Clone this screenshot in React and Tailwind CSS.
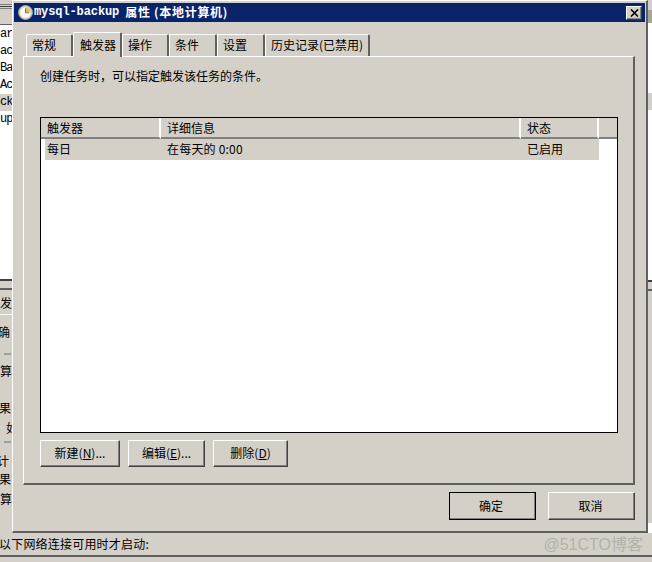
import React from 'react'

const cjk = "font-['SimSun','Noto_Sans_CJK_SC','Liberation_Sans',sans-serif]"
const raised = 'border border-t-white border-l-white border-r-[#404040] border-b-[#404040] bg-[#d4d0c8] shadow-[inset_-1px_-1px_0_#808080]'

function ClockIcon() {
  return (
    <svg width="15" height="15" viewBox="0 0 15 15" className="shrink-0">
      <circle cx="7.5" cy="7.5" r="6.9" fill="#d8d4cc" stroke="#b4ae9e" strokeWidth="1" />
      <circle cx="7.5" cy="7.5" r="5.2" fill="#fbfaf4" />
      <path d="M7.5 2.3A5.2 5.2 0 0 1 12.7 7.5H7.5Z" fill="#e6bc5c" />
      <path d="M7.5 3.4V7.8H11" fill="none" stroke="#77736a" strokeWidth="1" />
    </svg>
  )
}

function Tab({ label, className, active }) {
  return (
    <div
      className={`flex items-center rounded-t-[2px] border-t border-l border-t-white border-l-white border-r-2 border-r-[#606060] bg-[#d4d0c8] pb-[1px] text-[12px] text-black ${
        active ? 'z-10 -mb-px h-[25px] pl-[6px]' : 'h-[22px] pl-[5px]'
      } ${className}`}
    >
      <span className="whitespace-nowrap">{label}</span>
    </div>
  )
}

function HeaderCell({ label, className }) {
  return (
    <div className={`flex h-[21px] items-center border-b-2 border-r-2 border-b-[#808080] border-r-white pl-[6px] text-[12px] ${className}`}>
      {label}
    </div>
  )
}

function Hotkey({ before, letter, after }) {
  return (
    <span>
      {before}(<span className="underline">{letter}</span>){after}
    </span>
  )
}

function Button({ children, className }) {
  return <button type="button" className={`${raised} flex items-center justify-center pb-[1px] text-[12px] text-black ${className}`}>{children}</button>
}

function LeftStrip() {
  const rows = [
    ['ar', ''],
    ['ac', ''],
    ['Ba', ''],
    ['Ac', ''],
    ['ck', 'bg-[#d4d0c8]'],
    ['up', ''],
  ]
  return (
    <div className="flex h-[533px] w-[12px] flex-col overflow-hidden bg-[#d4d0c8]">
      <div className="flex h-[5px] flex-col justify-end"><div className="h-px bg-[#808080]" /></div>
      <div className="mt-[1px] h-[1px] bg-[#404040]" />
      <div className="mt-[1px] h-[1px] bg-[#808080]" />
      <div className="h-[15px]" />
      <div className="h-[1px] bg-[#606060]" />
      <div className="h-[254px] bg-white pt-[1px] font-['Liberation_Mono',monospace] text-[12px] leading-[17px] tracking-[-1px] text-black">
        {rows.map(([text, bg]) => (
          <div key={text} className={`h-[17px] whitespace-nowrap ${bg}`}>{text}</div>
        ))}
      </div>
      <div className="h-[2px] bg-[#404040]" />
      <div className="h-[7px]" />
      <div className="h-[2px] bg-[#606060]" />
      <div className={`h-[24px] overflow-hidden whitespace-nowrap pt-[5px] text-[12px] leading-[16px] text-black ${cjk}`}>发</div>
      <div className="h-px bg-white" />
      <div className={`flex flex-col text-[12px] leading-[18px] text-black ${cjk}`}>
        <div className="mt-[8px] h-[18px] -ml-[2px] whitespace-nowrap">确</div>
        <div className="mt-[12px] ml-[4px] h-[2px] w-[7px] bg-[#a0a0a0]" />
        <div className="mt-[7px] h-[18px]">算</div>
        <div className="mt-[19px] h-[18px] -ml-[1px]">果</div>
        <div className="ml-[6px] mt-[2px] h-[18px] whitespace-nowrap">如</div>
        <div className="mt-[4px] ml-[4px] h-[2px] w-[7px] bg-[#a0a0a0]" />
        <div className="mt-[9px] h-[18px] -ml-[3px] whitespace-nowrap">计</div>
        <div className="h-[18px] -ml-[1px]">果</div>
        <div className="mt-[2px] h-[18px]">算</div>
      </div>
    </div>
  )
}

function RightStrip() {
  return (
    <div className="flex h-[533px] w-[4px] flex-col overflow-hidden bg-white">
      <div className="h-[10px] bg-[#d4d0c8]" />
      <div className="h-[13px] bg-[#a8a49c]" />
      <div className="h-[70px]" />
      <div className="h-[17px] bg-[#d4d0c8]" />
      <div className="h-[170px]" />
      <div className="h-[2px] bg-[#404040]" />
      <div className="h-[7px] bg-[#d4d0c8]" />
      <div className="h-[2px] bg-[#606060]" />
      <div className="h-[232px] bg-[#d4d0c8]" />
    </div>
  )
}

function Dialog() {
  return (
    <div className={`absolute left-[12px] top-0 flex h-[533px] w-[636px] flex-col border-t border-l border-r-2 border-b-2 border-t-white border-l-white border-r-[#606060] border-b-[#606060] bg-[#d4d0c8] pl-[1px] pt-[2px] ${cjk}`}>
      <div className="flex h-[19px] w-[631px] items-center bg-[#0a246a] pl-[4px] pr-[3px] text-white">
        <ClockIcon />
        <span className="ml-[1px] whitespace-nowrap pb-[1px] font-['Liberation_Mono',monospace] text-[12px] font-bold tracking-[-0.1px]">mysql-backup</span>
        <span className={`ml-[6px] whitespace-nowrap pb-[1px] text-[12px] font-bold tracking-[0.7px] ${cjk}`}>属性 (本地计算机)</span>
        <button type="button" className={`${raised} ml-auto flex h-[14px] w-[16px] items-center justify-center`}>
          <svg width="9" height="8" viewBox="0 0 9 8">
            <path d="M1 0.5L8 7.5M8 0.5L1 7.5" stroke="#000" strokeWidth="1.6" />
          </svg>
        </button>
      </div>

      <div className="ml-[11px] mt-[10px] flex h-[24px] items-end pl-[1px]">
        <Tab label="常规" className="w-[47px]" />
        <Tab label="触发器" active className="w-[49px]" />
        <Tab label="操作" className="w-[47px]" />
        <Tab label="条件" className="w-[48px]" />
        <Tab label="设置" className="w-[48px]" />
        <Tab label="历史记录(已禁用)" className="w-[105px]" />
      </div>

      <div className="ml-[9px] flex h-[429px] w-[612px] flex-col border-t border-l border-r-2 border-b-2 border-t-white border-l-white border-r-[#606060] border-b-[#606060] pl-[16px] pt-[12px]">
        <p className="h-[14px] whitespace-nowrap text-[12px] leading-[14px] text-black">创建任务时{'\uFF0C'}可以指定触发该任务的条件。</p>
        <div className="mt-[34px] flex h-[316px] w-[578px] flex-col border border-black bg-white">
          <div className="flex bg-[#d4d0c8] text-black">
            <HeaderCell label="触发器" className="w-[120px]" />
            <HeaderCell label="详细信息" className="w-[360px]" />
            <HeaderCell label="状态" className="w-[78px]" />
            <div className="h-[21px] flex-1 border-b-2 border-b-[#808080]" />
          </div>
          <div className="ml-[4px] flex h-[21px] w-[554px] items-center bg-[#d4d0c8] pb-[1px] text-[12px] text-black">
            <span className="w-[120px] pl-[2px]">每日</span>
            <span className="w-[360px] whitespace-nowrap pl-[2px] tracking-[0.2px]">在每天的 0:00</span>
            <span className="pl-[2px]">已启用</span>
          </div>
        </div>
        <div className="mt-[7px] flex gap-[8px]">
          <Button className="h-[27px] w-[80px]"><Hotkey before="新建" letter="N" after="..." /></Button>
          <Button className="h-[27px] w-[77px]"><Hotkey before="编辑" letter="E" after="..." /></Button>
          <Button className="h-[27px] w-[75px]"><Hotkey before="删除" letter="D" /></Button>
        </div>
      </div>

      <div className="mt-[7px] flex w-[621px] justify-end gap-[12px]">
        <Button className="h-[28px] w-[87px] pr-[3px] outline outline-1 -outline-offset-1 outline-black">确定</Button>
        <Button className="h-[28px] w-[87px] pr-[2px]">取消</Button>
      </div>
    </div>
  )
}

export default function App() {
  return (
    <div className={`relative h-[562px] w-[652px] overflow-hidden bg-[#d4d0c8] ${cjk}`}>
      <div className="flex h-[533px] justify-between">
        <LeftStrip />
        <RightStrip />
      </div>
      <div className="relative flex h-[24px] items-center border-b-2 border-b-[#606060] text-[12px] text-black">
        <span className="-ml-[1px] whitespace-nowrap tracking-[0.2px]">以下网络连接可用时才启动:</span>
        <span className="absolute right-[9px] top-0 whitespace-nowrap font-['Liberation_Sans','Noto_Sans_CJK_SC',sans-serif] text-[16px] leading-[24px] text-[#b4b1aa]">@51CTO博客</span>
      </div>
      <Dialog />
    </div>
  )
}
